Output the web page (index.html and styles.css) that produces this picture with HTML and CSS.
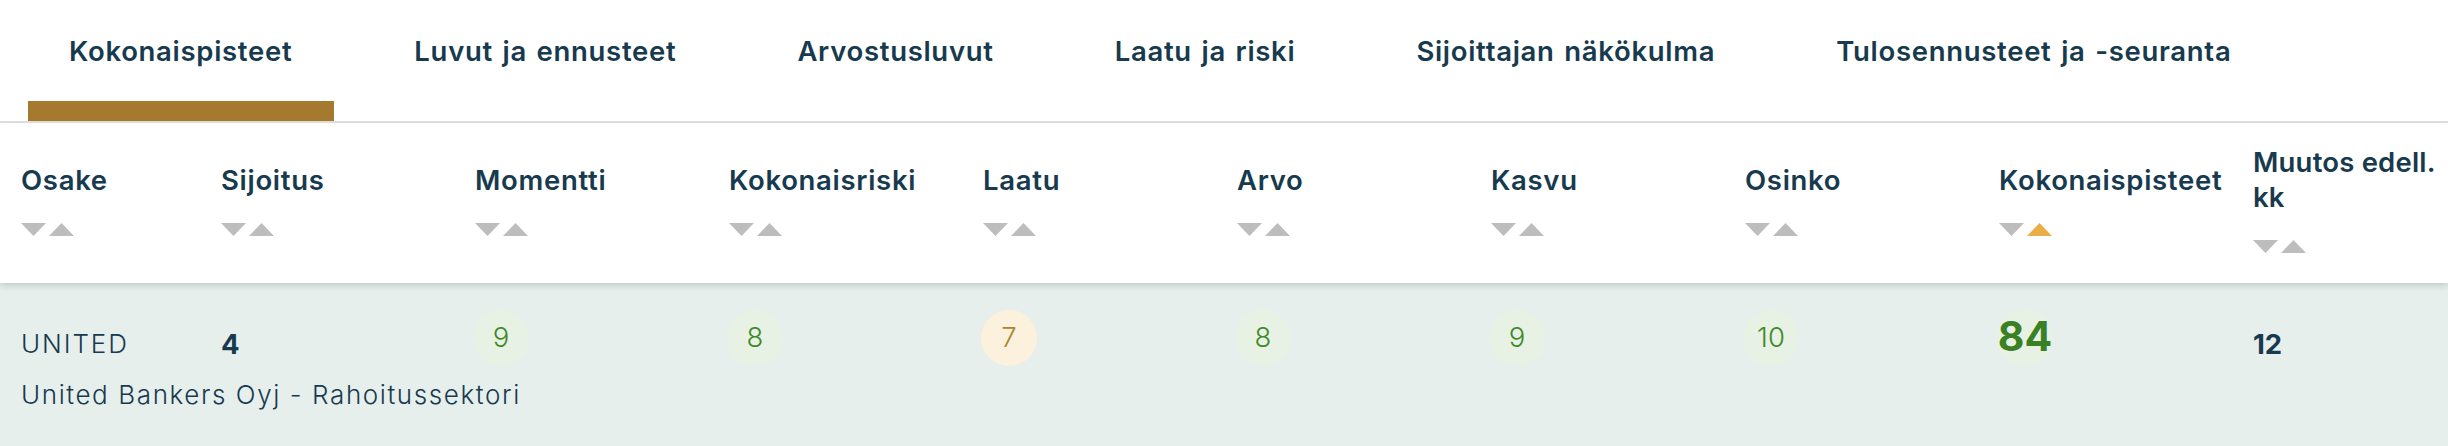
FILE: index.html
```html
<!DOCTYPE html>
<html lang="fi">
<head>
<meta charset="utf-8">
<title>Kokonaispisteet</title>
<link rel="stylesheet" href="styles.css">
</head>
<body>
<nav class="tabs">
  <a class="tab active">Kokonaispisteet</a>
  <a class="tab">Luvut ja ennusteet</a>
  <a class="tab">Arvostusluvut</a>
  <a class="tab">Laatu ja riski</a>
  <a class="tab">Sijoittajan näkökulma</a>
  <a class="tab">Tulosennusteet ja -seuranta</a>
</nav>
<div class="table">
  <div class="head">
    <div class="th"><span class="label">Osake</span><span class="sort"><svg width="25" height="13" viewBox="0 0 25 13"><polygon points="0,0 25,0 12.5,13" /></svg><svg width="25" height="13" viewBox="0 0 25 13"><polygon points="0,13 25,13 12.5,0" /></svg></span></div>
    <div class="th"><span class="label">Sijoitus</span><span class="sort"><svg width="25" height="13" viewBox="0 0 25 13"><polygon points="0,0 25,0 12.5,13" /></svg><svg width="25" height="13" viewBox="0 0 25 13"><polygon points="0,13 25,13 12.5,0" /></svg></span></div>
    <div class="th"><span class="label">Momentti</span><span class="sort"><svg width="25" height="13" viewBox="0 0 25 13"><polygon points="0,0 25,0 12.5,13" /></svg><svg width="25" height="13" viewBox="0 0 25 13"><polygon points="0,13 25,13 12.5,0" /></svg></span></div>
    <div class="th"><span class="label">Kokonaisriski</span><span class="sort"><svg width="25" height="13" viewBox="0 0 25 13"><polygon points="0,0 25,0 12.5,13" /></svg><svg width="25" height="13" viewBox="0 0 25 13"><polygon points="0,13 25,13 12.5,0" /></svg></span></div>
    <div class="th"><span class="label">Laatu</span><span class="sort"><svg width="25" height="13" viewBox="0 0 25 13"><polygon points="0,0 25,0 12.5,13" /></svg><svg width="25" height="13" viewBox="0 0 25 13"><polygon points="0,13 25,13 12.5,0" /></svg></span></div>
    <div class="th"><span class="label">Arvo</span><span class="sort"><svg width="25" height="13" viewBox="0 0 25 13"><polygon points="0,0 25,0 12.5,13" /></svg><svg width="25" height="13" viewBox="0 0 25 13"><polygon points="0,13 25,13 12.5,0" /></svg></span></div>
    <div class="th"><span class="label">Kasvu</span><span class="sort"><svg width="25" height="13" viewBox="0 0 25 13"><polygon points="0,0 25,0 12.5,13" /></svg><svg width="25" height="13" viewBox="0 0 25 13"><polygon points="0,13 25,13 12.5,0" /></svg></span></div>
    <div class="th"><span class="label">Osinko</span><span class="sort"><svg width="25" height="13" viewBox="0 0 25 13"><polygon points="0,0 25,0 12.5,13" /></svg><svg width="25" height="13" viewBox="0 0 25 13"><polygon points="0,13 25,13 12.5,0" /></svg></span></div>
    <div class="th"><span class="label">Kokonaispisteet</span><span class="sort"><svg width="25" height="13" viewBox="0 0 25 13"><polygon points="0,0 25,0 12.5,13" /></svg><svg class="on" width="25" height="13" viewBox="0 0 25 13"><polygon points="0,13 25,13 12.5,0" /></svg></span></div>
    <div class="th last"><span class="label">Muutos edell. kk</span><span class="sort"><svg width="25" height="13" viewBox="0 0 25 13"><polygon points="0,0 25,0 12.5,13" /></svg><svg width="25" height="13" viewBox="0 0 25 13"><polygon points="0,13 25,13 12.5,0" /></svg></span></div>
  </div>
  <div class="row">
    <div class="td"><span class="ticker">UNITED</span></div>
    <div class="td"><span class="num">4</span></div>
    <div class="td"><span class="badge good">9</span></div>
    <div class="td"><span class="badge good">8</span></div>
    <div class="td"><span class="badge mid">7</span></div>
    <div class="td"><span class="badge good">8</span></div>
    <div class="td"><span class="badge good">9</span></div>
    <div class="td"><span class="badge good">10</span></div>
    <div class="td"><span class="badge total">84</span></div>
    <div class="td"><span class="num">12</span></div>
    <div class="sub">United Bankers Oyj - Rahoitussektori</div>
  </div>
</div>
</body>
</html>
```

FILE: styles.css
```css
html, body {
  margin: 0;
  padding: 0;
  background: #ffffff;
}
body {
  font-family: "Inter", "Open Sans", sans-serif;
  color: #173a4e;
  width: 2448px;
  height: 446px;
  overflow: hidden;
}

.tabs {
  display: flex;
  gap: 39px;
  padding-left: 28px;
  height: 121px;
  border-bottom: 2px solid #dfdfdf;
}
.tab {
  display: block;
  box-sizing: border-box;
  height: 121px;
  padding: 34px 41px 0;
  border-bottom: 20px solid transparent;
  font-size: 27.5px;
  font-weight: 600;
  line-height: 35px;
  white-space: nowrap;
  letter-spacing: 0.7px;
  word-spacing: 2px;
}
.tab.active {
  border-bottom-color: #a5792e;
  padding-right: 42px;
}

.table {
  width: 2448px;
}
.head, .row {
  display: grid;
  grid-template-columns: 200px repeat(8, 254px) 1fr;
}
.head {
  position: relative;
  z-index: 1;
  height: 160px;
  background: #ffffff;
  box-shadow: 0 3px 6px rgba(0, 0, 0, 0.14);
  align-items: center;
  box-sizing: border-box;
  padding-bottom: 8px;
}
.th {
  display: flex;
  flex-direction: column;
  align-items: flex-start;
  gap: 25px;
  padding-left: 21px;
}
.label {
  font-size: 27.5px;
  font-weight: 600;
  line-height: 35px;
  letter-spacing: 0.7px;
}
.th.last .label {
  letter-spacing: 0.2px;
}
.sort {
  display: flex;
  gap: 3px;
  height: 13px;
}
.sort svg {
  display: block;
  fill: #bdbdbd;
}
.sort svg.on {
  fill: #eaae48;
}

.row {
  background: #e6efec;
  height: 163px;
  padding-top: 27px;
  box-sizing: border-box;
  align-items: start;
  align-content: start;
}
.td {
  padding-left: 21px;
  height: 56px;
}
.ticker {
  display: block;
  padding-top: 19px;
  font-size: 26px;
  font-weight: 300;
  line-height: 30px;
  letter-spacing: 1.9px;
}
.num {
  display: block;
  padding-top: 19px;
  font-size: 27.5px;
  font-weight: 700;
  line-height: 30px;
}
.badge {
  display: flex;
  align-items: center;
  justify-content: center;
  width: 56px;
  height: 56px;
  margin-left: -2px;
  border-radius: 50%;
  font-size: 27.5px;
  font-weight: 300;
  line-height: 1;
}
.badge.good {
  background: #e8f2e4;
  color: #3f8a2b;
}
.badge.mid {
  background: #fcf1dc;
  color: #a8862e;
}
.badge.total {
  background: #e8f2e4;
  color: #3a8024;
  font-size: 41px;
  font-weight: 700;
  padding-bottom: 4px;
  box-sizing: border-box;
}
.sub {
  grid-column: 1 / -1;
  padding: 14px 0 0 21px;
  font-size: 26px;
  font-weight: 300;
  line-height: 30px;
  letter-spacing: 1.6px;
}
```
